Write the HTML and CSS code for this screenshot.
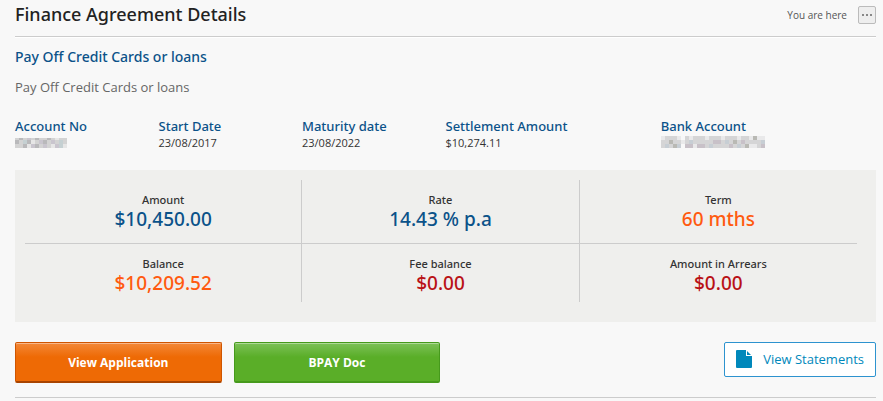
FILE: index.html
```html
<!DOCTYPE html>
<html lang="en">

<head>
    <meta charset="UTF-8">
    <title>Finance Agreement Details</title>
    <link rel="stylesheet" href="styles.css">
</head>

<body>
    <header class="page-header">
        <h1>Finance Agreement Details</h1>
        <nav class="breadcrumb">
            <span>You are here</span>
            <button type="button" class="crumb-btn" aria-label="Show path">
                <svg width="10" height="2" viewBox="0 0 10 2" shape-rendering="crispEdges">
                    <path d="M0 0h2v2H0zM4 0h2v2H4zM8 0h2v2H8z" fill="#888"/>
                </svg>
            </button>
        </nav>
    </header>

    <main>
        <h2>Pay Off Credit Cards or loans</h2>
        <p class="description">Pay Off Credit Cards or loans</p>

        <dl class="details">
            <div>
                <dt>Account No</dt>
                <dd>
                    <svg class="masked" width="52" height="12" viewBox="0 0 13 3" shape-rendering="crispEdges">
                        <path d="M0 .5h13V3H0z" fill="#d3d3d3"/>
                        <path d="M1 .5h1V1H1zM5 .5h1V1H5zM8 .5h1V1H8zM0 1h1v1H0zM3 1h1v1H3zM7 1h1v1H7zM2 2h1v1H2zM5 2h1v1H5z" fill="#b9b9bb"/>
                        <path d="M3 .5h1V1H3zM6 1h1v1H6zM9 1h1v1H9zM4 2h1v1H4zM7 2h1v1H7zM10 2h1v1h-1z" fill="#c9c5ce"/>
                        <path d="M4 1h1v1H4zM10 .5h1V1h-1zM9 2h1v1H9zM12 2h1v1h-1zM3 2h1v1H3z" fill="#e6e6e6"/>
                        <path d="M2 1h1v1H2zM11 1h1v1h-1zM11 2h1v1h-1z" fill="#c5d0d2"/>
                    </svg>
                </dd>
            </div>
            <div>
                <dt>Start Date</dt>
                <dd>23/08/2017</dd>
            </div>
            <div>
                <dt>Maturity date</dt>
                <dd>23/08/2022</dd>
            </div>
            <div>
                <dt>Settlement Amount</dt>
                <dd>$10,274.11</dd>
            </div>
            <div>
                <dt>Bank Account</dt>
                <dd>
                    <svg class="masked" width="104" height="12" viewBox="0 0 26 3" shape-rendering="crispEdges">
                        <path d="M0 0h5v3H0zM6 0h20v3H6z" fill="#d5d5d6"/>
                        <path d="M0 0h1v1H0zM4 0h1v1H4zM7 0h1v1H7zM11 0h1v1h-1zM15 0h1v1h-1zM19 0h1v1h-1zM22 0h1v1h-1zM24 0h2v1h-2zM5 1h1v1H5zM8 2h1v1H8zM22 2h2v1h-2z" fill="#e9e9ea"/>
                        <path d="M2 1h1v1H2zM18 1h1v1h-1zM23 0h1v1h-1zM21 2h1v1h-1zM3 2h1v1H3z" fill="#b9b9b4"/>
                        <path d="M6 2h2v1H6zM9 2h2v1H9zM13 1h2v1h-2zM17 2h1v1h-1zM25 2h1v1h-1zM20 1h1v1h-1z" fill="#c8c1c8"/>
                        <path d="M1 2h1v1H1zM4 2h1v1H4zM7 1h1v1H7zM12 2h1v1h-1zM16 1h1v1h-1zM19 2h1v1h-1zM25 1h1v1h-1z" fill="#c7ced4"/>
                    </svg>
                </dd>
            </div>
        </dl>

        <section class="summary">
            <dl class="summary-grid">
                <div class="cell">
                    <dt>Amount</dt>
                    <dd class="blue">$10,450.00</dd>
                </div>
                <div class="cell">
                    <dt>Rate</dt>
                    <dd class="blue">14.43 % p.a</dd>
                </div>
                <div class="cell">
                    <dt>Term</dt>
                    <dd class="orange">60 mths</dd>
                </div>
                <div class="cell">
                    <dt>Balance</dt>
                    <dd class="orange">$10,209.52</dd>
                </div>
                <div class="cell">
                    <dt>Fee balance</dt>
                    <dd class="red">$0.00</dd>
                </div>
                <div class="cell">
                    <dt>Amount in Arrears</dt>
                    <dd class="red">$0.00</dd>
                </div>
            </dl>
        </section>

        <div class="actions">
            <button type="button" class="btn btn-orange">View Application</button>
            <button type="button" class="btn btn-green">BPAY Doc</button>
            <button type="button" class="btn-outline">
                <svg width="16" height="18" viewBox="0 0 16 18">
                    <path d="M1 0h9v6h6v11q0 1-1 1H1q-1 0-1-1V1q0-1 1-1zM11 1l4 4h-4z" fill="#0088bb"/>
                </svg>
                View Statements
            </button>
        </div>
    </main>
</body>

</html>
```

FILE: styles.css
```css
* {
    box-sizing: border-box;
}

body {
    margin: 0;
    padding: 0 7px 0 15px;
    background-color: #f8f8f8;
    font-family: "Open Sans", Arial, sans-serif;
    font-size: 11px;
    color: #333;
}

h1,
h2,
p,
dl,
dd {
    margin: 0;
}

h1,
h2,
dt,
.cell dd {
    font-family: "Noto Sans", "Open Sans", sans-serif;
    font-weight: 500;
}

svg {
    display: block;
}

.page-header {
    display: flex;
    justify-content: space-between;
    align-items: center;
    height: 37px;
    padding-bottom: 7px;
    border-bottom: 1px solid #ccc;
    box-shadow: 0 1px 0 #fff;
}

h1 {
    font-size: 18px;
    line-height: 26px;
    padding-bottom: 2px;
    color: #222;
}

.breadcrumb {
    display: flex;
    align-items: center;
    gap: 11px;
    font-size: 10px;
    color: #555;
}

.crumb-btn {
    display: flex;
    align-items: center;
    justify-content: center;
    width: 18px;
    height: 18px;
    padding: 0;
    border: 1px solid #bbb;
    border-radius: 2px;
    background-color: #eee;
    cursor: pointer;
}

h2 {
    padding-top: 10px;
    font-size: 14px;
    line-height: 20px;
    color: #0b5289;
}

.description {
    margin-top: 10px;
    font-size: 13px;
    line-height: 20px;
    color: #666;
}

.details {
    display: grid;
    grid-template-columns: 2fr 2fr 2fr 3fr 3fr;
    margin-top: 20px;
}

.details dt {
    font-size: 13px;
    line-height: 18px;
    color: #0b5289;
}

.details dd {
    line-height: 16px;
}

.masked {
    margin-top: 1px;
}

.summary {
    margin-top: 19px;
    padding: 10px 19px 20px 10px;
    background-color: #efefed;
}

.summary-grid {
    display: grid;
    grid-template-columns: repeat(3, 1fr);
}

.cell {
    padding: 12px 0;
    border-right: 1px solid #ccc;
    border-bottom: 1px solid #ccc;
    text-align: center;
}

.cell:nth-child(3n) {
    border-right: none;
}

.cell:nth-child(n+4) {
    padding-bottom: 7px;
    border-bottom: none;
}

.cell dt {
    line-height: 16px;
}

.cell dd {
    font-size: 19px;
    line-height: 23px;
}

.cell .blue {
    color: #0b5289;
}

.cell .orange {
    color: #ff5a0f;
}

.cell .red {
    color: #b91116;
}

.actions {
    display: flex;
    align-items: flex-start;
    gap: 12px;
    padding: 20px 0 14px;
    border-bottom: 1px solid #ccc;
    box-shadow: 0 1px 0 #fff;
}

.btn {
    width: 24%;
    height: 41px;
    border: 1px solid;
    border-bottom-width: 2px;
    border-radius: 2px;
    font-family: inherit;
    font-size: 12px;
    font-weight: bold;
    color: #fff;
    cursor: pointer;
}

.btn-orange {
    border-color: #cf5500 #cf5500 #a84400;
    background: linear-gradient(#f38838, #ee6a05 14px);
    box-shadow: inset 0 1px 0 #f8b78a;
}

.btn-green {
    border-color: #469a1c;
    background: linear-gradient(#7dc158, #5aae28 14px);
    box-shadow: inset 0 1px 0 #afd998;
}

.btn-outline {
    display: flex;
    align-items: center;
    gap: 11px;
    height: 35px;
    margin-left: auto;
    padding: 0 11px 1px;
    border: 1px solid #2d93cf;
    border-radius: 2px;
    background-color: #fff;
    font-family: inherit;
    font-size: 13px;
    color: #0088bb;
    cursor: pointer;
}
```
